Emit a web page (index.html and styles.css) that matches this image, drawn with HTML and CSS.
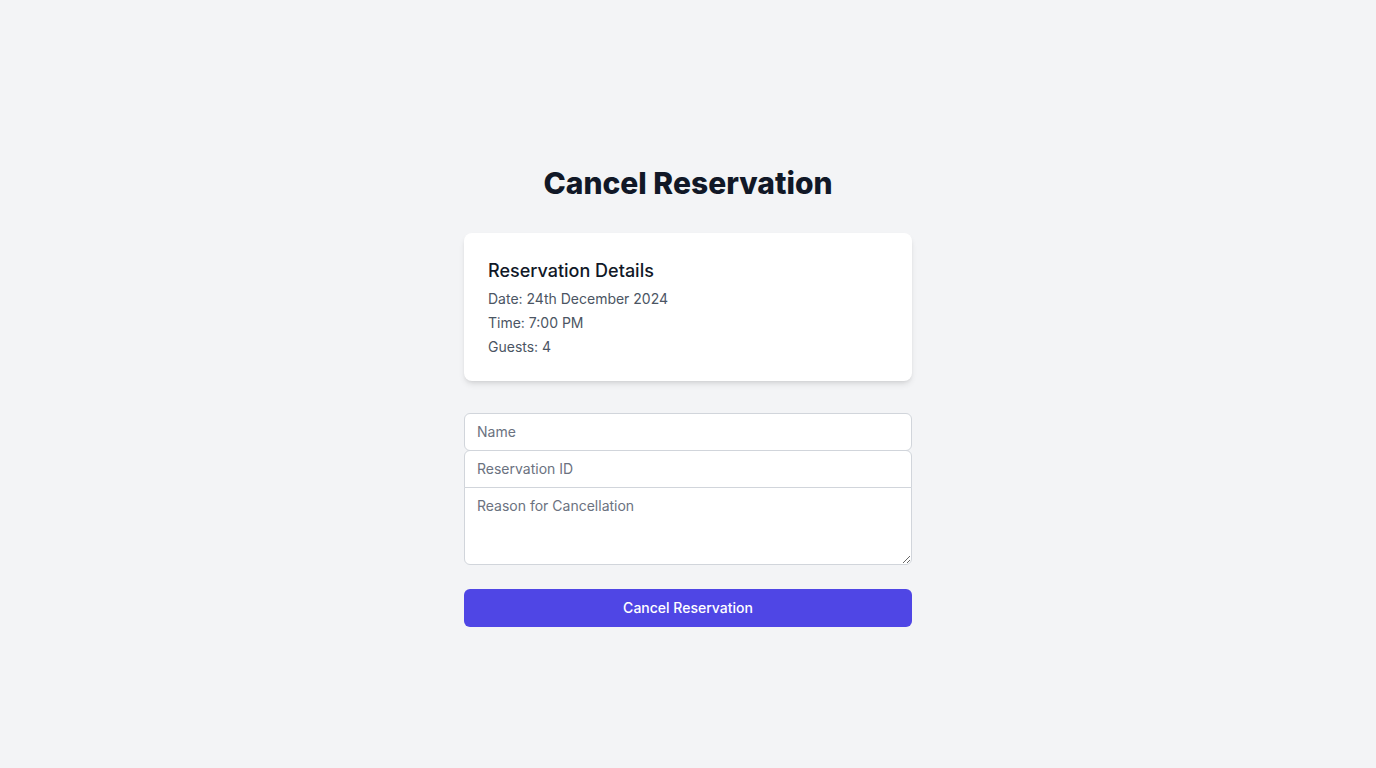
FILE: index.html
```html
<!DOCTYPE html>
<html lang="en">
<head>
<meta charset="utf-8">
<title>Cancel Reservation</title>
<link rel="stylesheet" href="styles.css">
</head>
<body>
<main class="page">
  <div class="wrap">
    <h1 class="title">Cancel Reservation</h1>
    <section class="card">
      <h2 class="card-title">Reservation Details</h2>
      <p class="detail">Date: 24th December 2024</p>
      <p class="detail">Time: 7:00 PM</p>
      <p class="detail">Guests: 4</p>
    </section>
    <form class="form">
      <div class="fields">
        <input class="field field-single" type="text" placeholder="Name">
        <input class="field field-top" type="text" placeholder="Reservation ID">
        <textarea class="field field-bottom" rows="3" placeholder="Reason for Cancellation"></textarea>
      </div>
      <button class="btn" type="button">Cancel Reservation</button>
    </form>
  </div>
</main>
</body>
</html>
```

FILE: styles.css
```css
* { box-sizing: border-box; }
html, body { margin: 0; padding: 0; }
body {
  background: #f3f4f6;
  font-family: Inter, "Noto Sans", "Liberation Sans", sans-serif;
  color: #111827;
}
.page {
  min-height: 768px;
  display: flex;
  align-items: center;
  justify-content: center;
  padding-top: 24px;
}
.wrap {
  width: 448px;
}
.title {
  margin: 0;
  text-align: center;
  font-size: 30px;
  line-height: 36px;
  font-weight: 800;
  color: #111827;
}
.card {
  margin-top: 32px;
  background: #fff;
  border-radius: 8px;
  padding: 24px;
  box-shadow: 0 4px 6px -1px rgba(0,0,0,0.1), 0 2px 4px -2px rgba(0,0,0,0.1);
}
.card-title {
  margin: 0;
  font-size: 18px;
  line-height: 28px;
  font-weight: 500;
  color: #111827;
}
.detail {
  margin: 4px 0 0;
  font-size: 14px;
  line-height: 20px;
  color: #4b5563;
}
.form {
  margin-top: 32px;
}
.fields {
  display: flex;
  flex-direction: column;
}
.field {
  display: block;
  width: 100%;
  margin: 0;
  padding: 8px 12px;
  font-family: inherit;
  font-size: 14px;
  line-height: 20px;
  color: #111827;
  background: #fff;
  border: 1px solid #d1d5db;
  border-radius: 0;
  outline: none;
}
.field::placeholder { color: #6b7280; }
.field-single { border-radius: 6px; }
.field-top {
  margin-top: -1px;
  border-radius: 6px 6px 0 0;
}
.field-bottom {
  margin-top: -1px;
  border-radius: 0 0 6px 6px;
  height: 78px;
  resize: vertical;
}
.btn {
  display: block;
  width: 100%;
  margin-top: 24px;
  padding: 9px 16px;
  font-family: inherit;
  font-size: 14px;
  line-height: 20px;
  font-weight: 500;
  color: #fff;
  background: #4f46e5;
  border: none;
  border-radius: 6px;
  cursor: pointer;
}
```
